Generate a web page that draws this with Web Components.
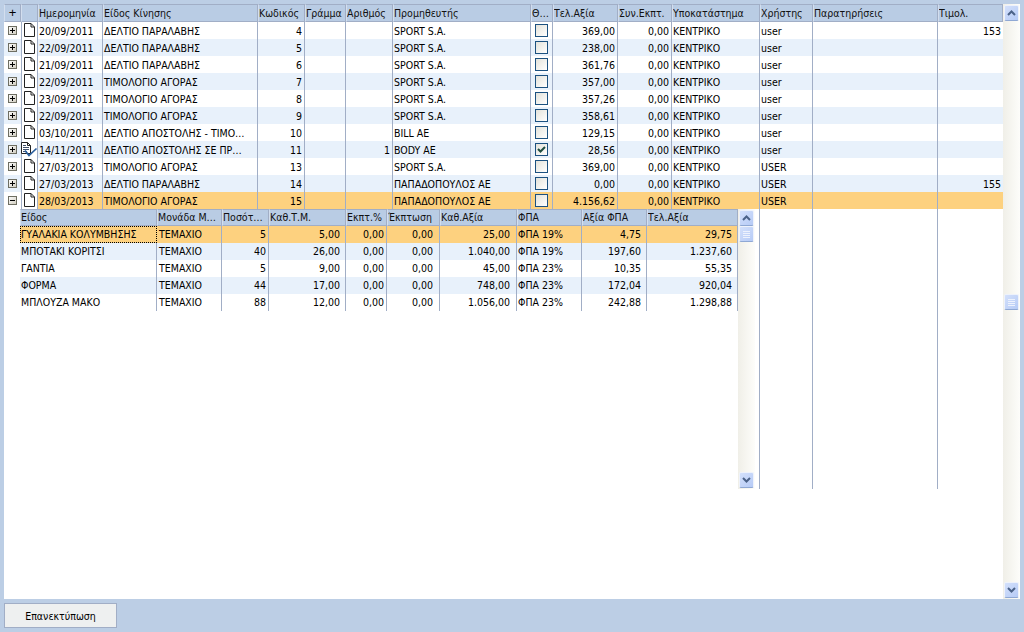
<!DOCTYPE html>
<html lang="el">
<head>
<meta charset="utf-8">
<title>Παραστατικά</title>
<style>
  html, body { margin: 0; height: 100%; background: #bccee5; overflow: hidden; }
</style>
</head>
<body>
<erp-screen></erp-screen>
<script>
const FONT = '10.5px "DejaVu Sans Condensed", "DejaVu Sans", sans-serif';

const gridCss = `
  .head, .row { display: grid; grid-template-columns: var(--cols); }
  .head { background: #b9cce4; }
  .head > div {
    box-sizing: border-box;
    height: var(--head-h);
    line-height: calc(var(--head-h) - var(--head-trim));
    padding-left: 0;
    white-space: nowrap;
    overflow: hidden;
    color: #111;
    border-right: 1px solid #a1aec6;
    border-top: 1px solid #a1aec6;
    border-bottom: 1px solid #a1aec6;
    border-left: 1px solid #d3deee;
  }
  .row { background: #fff; }
  .row.alt { background: #e8f1fb; }
  .row.sel { background: #fdd17f; }
  .row > div {
    box-sizing: border-box;
    height: 17px;
    line-height: var(--row-lh);
    padding: 0 2px 0 1px;
    white-space: nowrap;
    overflow: hidden;
    color: #000;
    border-right: 1px solid #a1aec6;
  }
  .row > .num { text-align: right; }
`;

class ScrollBar extends HTMLElement {
  connectedCallback() {
    const before = parseInt(this.getAttribute('thumb-top')) || 0;
    this.attachShadow({ mode: 'open' });
    this.shadowRoot.innerHTML = `
      <style>
        :host {
          display: flex;
          flex-direction: column;
          width: 17px;
          box-sizing: border-box;
          background: linear-gradient(to right, #f0efe8, #fdfdfa);
          padding: 1px 1px 1px 1px;
        }
        .btn {
          box-sizing: border-box;
          width: 15px;
          height: 16px;
          border: 1px solid #eef2fb;
          border-bottom-color: #8fa8d4;
          border-radius: 2px;
          background: linear-gradient(135deg, #d3e0fb, #b6cbf6);
          display: flex;
          align-items: center;
          justify-content: center;
        }
        .space { flex: 1; }
        .before { flex: none; height: ${before}px; }
        svg { display: block; }
      </style>
      <div class="btn"><svg width="9" height="6" viewBox="0 0 9 6"><path d="M1 5 L4.5 1.5 L8 5" fill="none" stroke="#4b6288" stroke-width="2"/></svg></div>
      <div class="before"></div>
      <div class="btn"><svg width="7" height="7" viewBox="0 0 7 7"><path d="M0 .5H7M0 2.5H7M0 4.5H7M0 6.5H7" stroke="#edf2fd" stroke-width="1"/></svg></div>
      <div class="space"></div>
      <div class="btn"><svg width="9" height="6" viewBox="0 0 9 6"><path d="M1 1 L4.5 4.5 L8 1" fill="none" stroke="#4b6288" stroke-width="2"/></svg></div>
    `;
  }
}

class ExpandBox extends HTMLElement {
  connectedCallback() {
    const open = this.hasAttribute('open');
    this.attachShadow({ mode: 'open' });
    this.shadowRoot.innerHTML = `
      <style>
        :host { display: block; width: 9px; height: 9px; }
        svg { display: block; }
      </style>
      <svg width="9" height="9" viewBox="0 0 9 9">
        <defs><linearGradient id="g" x1="0" y1="0" x2="1" y2="1"><stop offset="0" stop-color="#fff"/><stop offset="1" stop-color="#cfcbbd"/></linearGradient></defs>
        <rect x=".5" y=".5" width="8" height="8" fill="url(#g)" stroke="#6e6e62"/>
        <path d="${open ? 'M2 4.5H7' : 'M2 4.5H7M4.5 2V7'}" stroke="#000"/>
      </svg>
    `;
  }
}

class DocIcon extends HTMLElement {
  connectedCallback() {
    const signed = this.hasAttribute('signed');
    this.attachShadow({ mode: 'open' });
    this.shadowRoot.innerHTML = `
      <style>
        :host { display: block; width: 17px; height: 17px; }
        svg { display: block; overflow: visible; }
      </style>
      ${signed ? `
      <svg width="17" height="17" viewBox="0 0 17 17">
        <path d="M.5 1.5H6.5L9.5 4.5V12.5H.5Z" fill="#fff" stroke="#222"/>
        <path d="M6.5 1.5V4.5H9.5" fill="none" stroke="#222"/>
        <path d="M2 4.5H5M2 6.5H8M2 8.5H8M2 10.5H6" stroke="#40506a"/>
        <path d="M4 9.5L8 14.5L15.5 7.5" fill="none" stroke="#2a5f9e" stroke-width="1.7"/>
      </svg>` : `
      <svg width="17" height="17" viewBox="0 0 17 17">
        <path d="M3.5 1.5H10L13.5 5V14.5H3.5Z" fill="#fff" stroke="#222"/>
        <path d="M10 1.5V5H13.5" fill="none" stroke="#222"/>
      </svg>`}
    `;
  }
}

class TickBox extends HTMLElement {
  connectedCallback() {
    const checked = this.hasAttribute('checked');
    this.attachShadow({ mode: 'open' });
    this.shadowRoot.innerHTML = `
      <style>
        :host { display: block; width: 13px; height: 13px; }
        div {
          box-sizing: border-box;
          width: 13px;
          height: 13px;
          border: 1px solid #1c5180;
          background: linear-gradient(135deg, #e3e2da, #fff);
        }
        svg { display: block; }
      </style>
      <div>${checked ? '<svg width="11" height="11" viewBox="0 0 11 11"><path d="M2 5L4.5 7.5L9 3" fill="none" stroke="#1f4d40" stroke-width="2"/></svg>' : ''}</div>
    `;
  }
}

class FlatButton extends HTMLElement {
  connectedCallback() {
    this.attachShadow({ mode: 'open' });
    this.shadowRoot.innerHTML = `
      <style>
        :host {
          display: flex;
          align-items: center;
          justify-content: center;
          box-sizing: border-box;
          width: 113px;
          height: 25px;
          background: #eef0f0;
          border: 1px solid #a1aec6;
          color: #000;
          font: ${FONT};
        }
      </style>
      <slot></slot>
    `;
  }
}

class LinesGrid extends HTMLElement {
  connectedCallback() {
    const head = ['Είδος', 'Μονάδα Μ…', 'Ποσότ…', 'Καθ.Τ.Μ.', 'Εκπτ.%', 'Έκπτωση', 'Καθ.Αξία', 'ΦΠΑ', 'Αξία ΦΠΑ', 'Τελ.Αξία'];
    const rows = [
      ['ΓΥΑΛΑΚΙΑ ΚΟΛΥΜΒΗΣΗΣ', 'ΤΕΜΑΧΙΟ', '5', '5,00', '0,00', '0,00', '25,00', 'ΦΠΑ 19%', '4,75', '29,75'],
      ['ΜΠΟΤΑΚΙ ΚΟΡΙΤΣΙ', 'ΤΕΜΑΧΙΟ', '40', '26,00', '0,00', '0,00', '1.040,00', 'ΦΠΑ 19%', '197,60', '1.237,60'],
      ['ΓΑΝΤΙΑ', 'ΤΕΜΑΧΙΟ', '5', '9,00', '0,00', '0,00', '45,00', 'ΦΠΑ 23%', '10,35', '55,35'],
      ['ΦΟΡΜΑ', 'ΤΕΜΑΧΙΟ', '44', '17,00', '0,00', '0,00', '748,00', 'ΦΠΑ 23%', '172,04', '920,04'],
      ['ΜΠΛΟΥΖΑ ΜΑΚΟ', 'ΤΕΜΑΧΙΟ', '88', '12,00', '0,00', '0,00', '1.056,00', 'ΦΠΑ 23%', '242,88', '1.298,88']
    ];
    const isNum = i => [2, 3, 4, 5, 6, 8, 9].includes(i);
    const rowHtml = rows.map((r, n) => `
      <div class="row ${n === 0 ? 'sel' : n % 2 ? 'alt' : ''}">
        ${r.map((c, i) => `<div class="${isNum(i) ? 'num' : ''} ${n === 0 && i === 0 ? 'focus' : ''}">${c}</div>`).join('')}
      </div>`).join('');

    this.attachShadow({ mode: 'open' });
    this.shadowRoot.innerHTML = `
      <style>
        :host {
          display: flex;
          flex: none;
          width: 735px;
          height: 280px;
          --cols: 137px 65px 47px 77px 41px 53px 77px 65px 65px 91px;
          --head-h: 17px;
          --head-trim: 3px;
          --row-lh: 17px;
        }
        .body { width: 718px; background: #fff; }
        ${gridCss}
        .row > .focus { outline: 1px dotted #000; outline-offset: -1px; border-right: 0; padding-left: 1px; }
        .row > div:nth-child(2) { padding-left: 2px; }
        .row > div:nth-child(4) { padding-right: 5px; }
        .row > div:nth-child(6) { padding-right: 6px; }
        .row > div:nth-child(7) { padding-right: 6px; }
        .row > div:nth-child(9) { padding-right: 5px; }
        .row > div:nth-child(10) { padding-right: 5px; }
      </style>
      <div class="body">
        <div class="head">${head.map(h => `<div>${h}</div>`).join('')}</div>
        ${rowHtml}
      </div>
      <scroll-bar></scroll-bar>
    `;
  }
}

class DocsGrid extends HTMLElement {
  connectedCallback() {
    const head = ['Ημερομηνία', 'Είδος Κίνησης', 'Κωδικός', 'Γράμμα', 'Αριθμός', 'Προμηθευτής', 'Θ…', 'Τελ.Αξία', 'Συν.Εκπτ.', 'Υποκατάστημα', 'Χρήστης', 'Παρατηρήσεις', 'Τιμολ.'];
    const rows = [
      ['20/09/2011', 'ΔΕΛΤΙΟ ΠΑΡΑΛΑΒΗΣ', '4', '', '', 'SPORT S.A.', 0, '369,00', 'user', '153'],
      ['22/09/2011', 'ΔΕΛΤΙΟ ΠΑΡΑΛΑΒΗΣ', '5', '', '', 'SPORT S.A.', 0, '238,00', 'user', ''],
      ['21/09/2011', 'ΔΕΛΤΙΟ ΠΑΡΑΛΑΒΗΣ', '6', '', '', 'SPORT S.A.', 0, '361,76', 'user', ''],
      ['22/09/2011', 'ΤΙΜΟΛΟΓΙΟ ΑΓΟΡΑΣ', '7', '', '', 'SPORT S.A.', 0, '357,00', 'user', ''],
      ['23/09/2011', 'ΤΙΜΟΛΟΓΙΟ ΑΓΟΡΑΣ', '8', '', '', 'SPORT S.A.', 0, '357,26', 'user', ''],
      ['22/09/2011', 'ΤΙΜΟΛΟΓΙΟ ΑΓΟΡΑΣ', '9', '', '', 'SPORT S.A.', 0, '358,61', 'user', ''],
      ['03/10/2011', 'ΔΕΛΤΙΟ ΑΠΟΣΤΟΛΗΣ - ΤΙΜΟ…', '10', '', '', 'BILL AE', 0, '129,15', 'user', ''],
      ['14/11/2011', 'ΔΕΛΤΙΟ ΑΠΟΣΤΟΛΗΣ ΣΕ ΠΡ…', '11', '', '1', 'BODY AE', 1, '28,56', 'user', ''],
      ['27/03/2013', 'ΤΙΜΟΛΟΓΙΟ ΑΓΟΡΑΣ', '13', '', '', 'SPORT S.A.', 0, '369,00', 'USER', ''],
      ['27/03/2013', 'ΔΕΛΤΙΟ ΠΑΡΑΛΑΒΗΣ', '14', '', '', 'ΠΑΠΑΔΟΠΟΥΛΟΣ ΑΕ', 0, '0,00', 'USER', '155'],
      ['28/03/2013', 'ΤΙΜΟΛΟΓΙΟ ΑΓΟΡΑΣ', '15', '', '', 'ΠΑΠΑΔΟΠΟΥΛΟΣ ΑΕ', 0, '4.156,62', 'USER', '']
    ];
    const rowHtml = rows.map((r, n) => {
      const sel = n === rows.length - 1;
      const signed = n === 7;
      return `
      <div class="row ${sel ? 'sel' : n % 2 ? 'alt' : ''}">
        <div class="ctl ${sel ? 'white' : ''}"><expand-box ${sel ? 'open' : ''}></expand-box></div>
        <div class="ico"><doc-icon ${signed ? 'signed' : ''}></doc-icon></div>
        <div>${r[0]}</div>
        <div>${r[1]}</div>
        <div class="num">${r[2]}</div>
        <div class="num">${r[3]}</div>
        <div class="num">${r[4]}</div>
        <div>${r[5]}</div>
        <div class="chk"><tick-box ${r[6] ? 'checked' : ''}></tick-box></div>
        <div class="num">${r[7]}</div>
        <div class="num">0,00</div>
        <div>ΚΕΝΤΡΙΚΟ</div>
        <div>${r[8]}</div>
        <div></div>
        <div class="num last">${r[9]}</div>
      </div>`;
    }).join('');

    this.attachShadow({ mode: 'open' });
    this.shadowRoot.innerHTML = `
      <style>
        :host {
          display: block;
          flex: none;
          width: 999px;
          background: #fff;
          --cols: 17px 17px 65px 155px 47px 41px 47px 138px 22px 65px 54px 88px 53px 125px 65px;
          --head-h: 18px;
          --head-trim: 2px;
          --row-lh: 18px;
        }
        ${gridCss}
        .head > .plus { padding: 0; text-align: center; font: 13px "Liberation Sans", sans-serif; line-height: 15px; color: #000; }
        .row > .ctl { display: flex; align-items: center; justify-content: center; padding: 0; border-right: 0; }
        .row > .ctl.white { background: #fff; }
        .row > .ico { padding: 0; background: #fff; border-left: 1px solid #a1aec6; overflow: visible; }
        .row > .ico doc-icon { margin-left: -1px; }
        .row > .chk { display: flex; align-items: center; justify-content: center; padding: 0 0 1px; }
        .row > .last { border-right: 0; }
        .band { display: flex; height: 280px; }
        .gutter { flex: none; width: 16px; }
        .line { flex: none; box-sizing: border-box; border-right: 1px solid #a1aec6; }
      </style>
      <div class="head">
        <div class="plus">+</div>
        <div></div>
        ${head.map(h => `<div>${h}</div>`).join('')}
      </div>
      ${rowHtml}
      <div class="band">
        <div class="gutter"></div>
        <lines-grid></lines-grid>
        <div class="line" style="width:5px"></div>
        <div class="line" style="width:53px"></div>
        <div class="line" style="width:125px"></div>
      </div>
    `;
  }
}

class ErpScreen extends HTMLElement {
  connectedCallback() {
    this.attachShadow({ mode: 'open' });
    this.shadowRoot.innerHTML = `
      <style>
        :host {
          display: flex;
          flex-direction: column;
          box-sizing: border-box;
          width: 1024px;
          height: 632px;
          padding: 4px;
          font: ${FONT};
          background: #bccee5;
        }
        .main { display: flex; height: 595px; width: 1016px; background: #fff; flex: none; }
        .foot { display: flex; padding-top: 4px; }
      </style>
      <div class="main">
        <docs-grid></docs-grid>
        <scroll-bar thumb-top="273"></scroll-bar>
      </div>
      <div class="foot">
        <flat-button>Επανεκτύπωση</flat-button>
      </div>
    `;
  }
}

customElements.define('scroll-bar', ScrollBar);
customElements.define('expand-box', ExpandBox);
customElements.define('doc-icon', DocIcon);
customElements.define('tick-box', TickBox);
customElements.define('flat-button', FlatButton);
customElements.define('lines-grid', LinesGrid);
customElements.define('docs-grid', DocsGrid);
customElements.define('erp-screen', ErpScreen);
</script>
</body>
</html>
